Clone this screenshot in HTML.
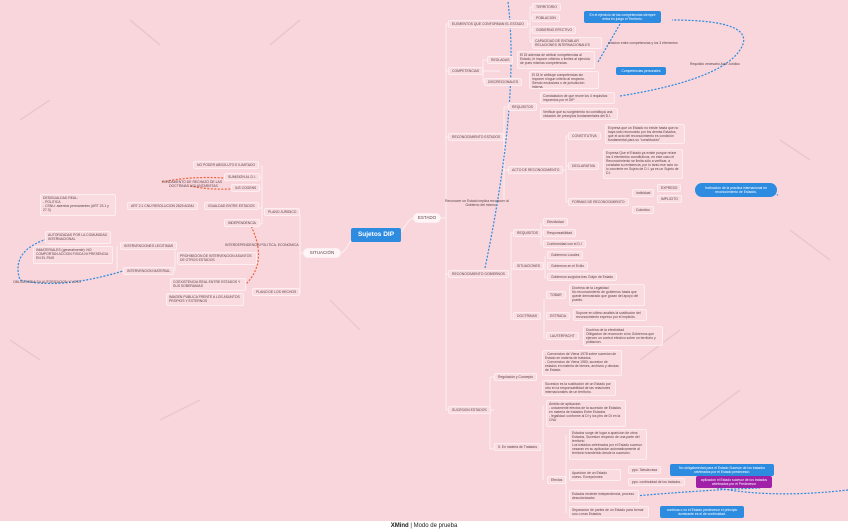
<!DOCTYPE html>
<html><head><meta charset="utf-8"><style>
body{margin:0;width:848px;height:532px;overflow:hidden;background:#f8d6dc;font-family:"Liberation Sans",sans-serif;position:relative}
.n{position:absolute;box-sizing:border-box;border:1px solid #fdeef1;border-radius:2px;background:#f9dbe0;font-size:3.4px;line-height:4.1px;color:#5a4548;padding:1px 2px;overflow:hidden}
.n[style*="height:8px"]{white-space:nowrap;width:auto!important;overflow:visible;padding:1px 3px;line-height:5px}
.c{display:flex;align-items:center}
.t{position:absolute;font-size:3.4px;line-height:4.4px;color:#5a4548;white-space:nowrap}
.b{position:absolute;box-sizing:border-box;background:#2d8be0;color:#fff;border-radius:2px;font-size:3.4px;line-height:4.2px;text-align:center;display:flex;align-items:center;justify-content:center;padding:1px 3px}
#foot{position:absolute;left:0;top:521px;width:848px;height:11px;background:#fff;font-size:6px;text-align:center;line-height:11px;color:#222}
</style></head><body>
<svg width="848" height="532" style="position:absolute;left:0;top:0">
<g stroke="#ecc6cd" stroke-width="1.5">
<line x1="130" y1="20" x2="160" y2="45"/><line x1="300" y1="20" x2="270" y2="45"/>
<line x1="20" y1="120" x2="50" y2="100"/><line x1="780" y1="140" x2="810" y2="160"/>
<line x1="640" y1="360" x2="680" y2="330"/><line x1="700" y1="420" x2="740" y2="390"/>
<line x1="160" y1="420" x2="200" y2="400"/><line x1="330" y1="300" x2="360" y2="330"/>
<line x1="790" y1="230" x2="830" y2="260"/><line x1="10" y1="340" x2="40" y2="360"/>
</g>
<g stroke="#fdf0f2" stroke-width="1" fill="none">
<path d="M401 232 Q410 218 413 218"/><path d="M351 240 Q345 252 341 253"/>
<path d="M441 218 H446"/><line x1="446" y1="24" x2="446" y2="410"/>
<path d="M446 24H448M446 71H448M446 137H448M446 274H448M446 410H448"/>
<line x1="530" y1="7" x2="530" y2="42"/><path d="M528 24H530M530 7H532M530 18H532M530 30H532M530 42H532"/>
<line x1="483" y1="60" x2="483" y2="82"/><path d="M500 71H483M483 60H487M483 82H484"/>
<line x1="504" y1="107" x2="504" y2="202"/><path d="M508 137H504M504 107H508M504 170H508"/>
<line x1="566" y1="136" x2="566" y2="202"/><path d="M562 170H566M566 136H568M566 166H568M566 202H568"/>
<line x1="511" y1="233" x2="511" y2="319"/><path d="M510 274H511M511 233H513M511 269H513M511 319H513"/>
<line x1="541" y1="223" x2="541" y2="245"/><line x1="545" y1="256" x2="545" y2="279"/><line x1="544" y1="299" x2="544" y2="339"/>
<line x1="490" y1="377" x2="490" y2="449"/><path d="M494 410H490M490 377H494M490 449H494"/>
<line x1="543" y1="405" x2="543" y2="480"/><line x1="566" y1="435" x2="566" y2="513"/>
<line x1="300" y1="214" x2="300" y2="293"/><path d="M303 253H300M300 214H298M300 293H298"/>
<line x1="262" y1="166" x2="262" y2="224"/><path d="M262 166H261M262 178H258M262 189H257M262 208H258M262 224H258"/>
<line x1="117" y1="246" x2="117" y2="271"/><line x1="175" y1="246" x2="175" y2="271"/>
</g>
<g stroke="#2d8be0" stroke-width="1.2" fill="none" stroke-dasharray="2,1.5">
<path d="M620 24 L598 62"/><path d="M620 96 Q720 80 740 50 Q760 20 672 20"/>
<path d="M508 2 Q520 100 485 268"/><path d="M700 484 Q760 500 848 490"/>
<path d="M612 498 Q700 490 760 488"/><path d="M50 238 Q10 250 20 280 Q60 290 123 271"/>
<path d="M760 190 L778 195"/>
</g>
<g stroke="#f0643c" stroke-width="1.2" fill="none" stroke-dasharray="2,1.5">
<path d="M162 182 Q190 176 224 178"/><path d="M190 186 Q210 190 231 189"/>
<path d="M248 220 Q270 260 246 284"/>
</g>
</svg>

<div class="n c" style="left:351px;top:228px;width:50px;height:14px;background:#2d8be0;color:#fff;font-size:6.5px;font-weight:bold;justify-content:center;border:none">Sujetos DIP</div>
<div class="n c" style="left:413px;top:213px;width:28px;height:10px;background:#fff5f7;justify-content:center;font-size:4.5px;border-radius:5px">ESTADO</div>
<div class="n c" style="left:303px;top:248px;width:38px;height:10px;background:#fff5f7;justify-content:center;font-size:4.5px;border-radius:5px">SITUACIÓN</div>
<div class="t" style="left:445px;top:199px;text-align:center">Reconocer un Estado implica reconocer al<br>&nbsp;&nbsp;&nbsp;&nbsp;&nbsp;&nbsp;&nbsp;&nbsp;&nbsp;Gobierno del mismo.</div>

<div class="n" style="left:448px;top:20px;width:80px;height:8px">ELEMENTOS QUE CONFORMAN EL ESTADO</div>
<div class="n" style="left:448px;top:67px;width:52px;height:8px">COMPETENCIAS</div>
<div class="n" style="left:448px;top:133px;width:58px;height:8px">RECONOCIMIENTO ESTADOS</div>
<div class="n" style="left:448px;top:270px;width:62px;height:8px">RECONOCIMIENTO GOBIERNOS</div>
<div class="n" style="left:448px;top:406px;width:46px;height:8px">SUCESION ESTADOS</div>

<div class="n" style="left:532px;top:3px;width:26px;height:8px">TERRITORIO</div>
<div class="n" style="left:532px;top:14px;width:26px;height:8px">POBLACION</div>
<div class="n" style="left:532px;top:26px;width:40px;height:8px">GOBIERNO EFECTIVO</div>
<div class="n" style="left:532px;top:37px;width:70px;height:12px">CAPACIDAD DE ENTABLAR RELACIONES INTERNACIONALES</div>
<div class="t" style="left:608px;top:41px">relacion entre competencias y los 3 elementos</div>
<div class="b" style="left:584px;top:11px;width:77px;height:12px">En el ejercicio de las competencias siempre entra en juego el Territorio.</div>
<div class="b" style="left:616px;top:67px;width:50px;height:8px">Competencias personales</div>
<div class="t" style="left:690px;top:62px">Requisito necesario Acto Juridico</div>

<div class="n" style="left:487px;top:56px;width:24px;height:8px">REGLADAS</div>
<div class="n" style="left:484px;top:78px;width:36px;height:8px">DISCRECIONALES</div>
<div class="n" style="left:517px;top:51px;width:78px;height:18px">El DI ademas de atribuir competencias al Estado, le impone criterios o limites al ejercicio de pues mismas competencias.</div>
<div class="n" style="left:529px;top:71px;width:70px;height:18px">El DI le atribuye competencias sin imponer ningun criterio al respecto. Siendo exclusivas o de jurisdiccion interna.</div>

<div class="n" style="left:508px;top:103px;width:26px;height:8px">REQUISITOS</div>
<div class="n" style="left:508px;top:166px;width:54px;height:8px">ACTO DE RECONOCIMIENTO</div>
<div class="n" style="left:540px;top:92px;width:75px;height:12px">Constatacion de que reune los 4 requisitos impuestos por el DIP</div>
<div class="n" style="left:540px;top:108px;width:78px;height:12px">Verificar que su surgimiento no constituya una violación de principios fundamentales del D.I.</div>
<div class="n" style="left:568px;top:132px;width:30px;height:8px">CONSTITUTIVA</div>
<div class="n" style="left:605px;top:124px;width:80px;height:20px">Expresa que un Estado no existe hasta que no haya sido reconocido por los demás Estados, que el acto del reconocimiento es condición fundamental para su "constitución"</div>
<div class="n" style="left:568px;top:162px;width:28px;height:8px">DECLARATIVA</div>
<div class="n" style="left:603px;top:149px;width:80px;height:30px">Expresa Que el Estado ya existe porque reúne los 4 elementos constitutivos, en este caso el Reconocimiento se limita sólo a verificar, a constatar su existencia, por lo tanto ese acto no lo convierte en Sujeto de D.I. ya es un Sujeto de D.I.</div>
<div class="n" style="left:568px;top:198px;width:58px;height:8px">FORMAS DE RECONOCIMIENTO</div>
<div class="n" style="left:632px;top:189px;width:22px;height:8px">Individual</div>
<div class="n" style="left:632px;top:206px;width:20px;height:8px">Colectivo</div>
<div class="n" style="left:657px;top:184px;width:22px;height:8px">EXPRESO</div>
<div class="n" style="left:657px;top:195px;width:22px;height:8px">IMPLICITO</div>
<div class="b" style="left:695px;top:183px;width:82px;height:14px;border-radius:7px">Inclinacion de la practica internacional en reconocimiento de Estados.</div>

<div class="n" style="left:513px;top:229px;width:28px;height:8px">REQUISITOS</div>
<div class="n" style="left:543px;top:218px;width:24px;height:8px">Efectividad</div>
<div class="n" style="left:543px;top:229px;width:34px;height:8px">Responsabilidad</div>
<div class="n" style="left:543px;top:240px;width:42px;height:8px">Conformidad con el D.I</div>
<div class="n" style="left:513px;top:262px;width:32px;height:8px">SITUACIONES</div>
<div class="n" style="left:547px;top:251px;width:34px;height:8px">Gobiernos Locales</div>
<div class="n" style="left:547px;top:262px;width:38px;height:8px">Gobiernos en el Exilio</div>
<div class="n" style="left:547px;top:273px;width:70px;height:8px">Gobiernos surgidos tras Golpe de Estado</div>
<div class="n" style="left:513px;top:312px;width:26px;height:8px">DOCTRINAS</div>
<div class="n" style="left:546px;top:291px;width:18px;height:8px">TOBAR</div>
<div class="n" style="left:569px;top:284px;width:76px;height:22px">Doctrina de la Legalidad<br>No reconocimiento de gobiernos hasta que quede demostrado que gozan del apoyo del pueblo.</div>
<div class="n" style="left:546px;top:312px;width:22px;height:8px">ESTRADA</div>
<div class="n" style="left:573px;top:309px;width:74px;height:12px">Supone en ultimo analisis la sustitucion del reconocimiento expreso por el implicito.</div>
<div class="n" style="left:546px;top:332px;width:30px;height:8px">LAUTERPACHT</div>
<div class="n" style="left:583px;top:326px;width:80px;height:20px">Doctrina de la efectividad<br>Obligacion de reconocer a los Gobiernos que ejercen un control efectivo sobre un territorio y poblacion.</div>

<div class="n" style="left:494px;top:373px;width:40px;height:8px">Regulación y Concepto</div>
<div class="n" style="left:542px;top:350px;width:80px;height:26px">- Convencion de Viena 1978 sobre sucesion de Estado en materia de tratados.<br>- Convencion de Viena 1983, sucesion de estados en materia de bienes, archivos y deudas de Estado.</div>
<div class="n" style="left:542px;top:380px;width:74px;height:16px">Sucesion es la sustitución de un Estado por otro en la responsabilidad de las relaciones internacionales de un territorio.</div>
<div class="n" style="left:494px;top:443px;width:48px;height:8px">5. En materia de Tratados</div>
<div class="n" style="left:546px;top:400px;width:80px;height:27px">Ámbito de aplicacion:<br>- unicamente efectos de la sucesión de Estados en materia de tratados Entre Estados<br>- legalidad: conforme al DI y los pbs de DI en la CNU</div>
<div class="n" style="left:547px;top:476px;width:18px;height:8px">Efectos</div>
<div class="n" style="left:569px;top:429px;width:78px;height:31px">Estados surge de lugar a aparicion de otros Estados, Sucesion respecto de una parte del territorio<br>Los tratados celebrados por el Estado sucesor cesaran en su aplicacion automaticamente al territorio transferido desde la sucesión.</div>
<div class="n" style="left:569px;top:469px;width:52px;height:12px">Aparicion de un Estado nuevo. Excepciones:</div>
<div class="n" style="left:628px;top:466px;width:32px;height:8px">ppo. Tabula rasa</div>
<div class="n" style="left:628px;top:478px;width:58px;height:8px">ppo. continuidad de los tratados.</div>
<div class="n" style="left:569px;top:490px;width:70px;height:12px">Estados reciente independencia, proceso descolonizador</div>
<div class="n" style="left:569px;top:506px;width:80px;height:12px">Separacion de partes de un Estado para formar uno o mas Estados.</div>
<div class="b" style="left:670px;top:464px;width:104px;height:12px">No obligatoriedad para el Estado Sucesor de los tratados celebrados por el Estado predecesor.</div>
<div class="b" style="left:696px;top:476px;width:76px;height:12px;background:#a020a8">aplicacion el Estado sucesor de los tratados celebrados por el Predecesor</div>
<div class="b" style="left:660px;top:506px;width:84px;height:12px">continua o no el Estado predecesor el principio dominante es el de continuidad.</div>

<div class="n" style="left:264px;top:208px;width:34px;height:8px">PLANO JURIDICO</div>
<div class="n" style="left:252px;top:288px;width:46px;height:8px">PLANO DE LOS HECHOS</div>
<div class="n" style="left:193px;top:161px;width:68px;height:8px">NO PODER ABSOLUTO E ILIMITADO</div>
<div class="n" style="left:224px;top:173px;width:34px;height:8px">SUMISION AL D.I.</div>
<div class="n" style="left:231px;top:184px;width:26px;height:8px">IUS COGENS</div>
<div class="t" style="left:162px;top:180px;text-align:center">FUNDAMENTO DE RECHAZO DE LAS<br>&nbsp;&nbsp;&nbsp;DOCTRINAS VOLUNTARISTAS</div>
<div class="n" style="left:204px;top:202px;width:54px;height:8px">IGUALDAD ENTRE ESTADOS</div>
<div class="n" style="left:224px;top:219px;width:34px;height:8px">INDEPENDENCIA</div>
<div class="t" style="left:225px;top:243px">INTERDEPENDENCIA POLITICA, ECONOMICA</div>
<div class="n" style="left:127px;top:202px;width:72px;height:8px">ART 2.1 CNU RESOLUCION 2625 AGNU</div>
<div class="n" style="left:40px;top:194px;width:76px;height:22px">DESIGUALDAD REAL:<br>- POLITICA<br>- CSNU: asientos permanentes (ART 23.1 y 27.3)</div>
<div class="n" style="left:45px;top:231px;width:66px;height:13px">AUTORIZADAS POR LA COMUNIDAD INTERNACIONAL</div>
<div class="n" style="left:33px;top:246px;width:80px;height:18px">INMATERIALES (generalmente): NO COMPORTAN ACCION FISICA NI PRESENCIA EN EL PAIS</div>
<div class="n" style="left:120px;top:242px;width:52px;height:8px">INTERVENCIONES LEGITIMAS</div>
<div class="n" style="left:177px;top:252px;width:80px;height:13px">PROHIBICION DE INTERVENCION ASUNTOS DE OTROS ESTADOS</div>
<div class="n" style="left:123px;top:267px;width:50px;height:8px">INTERVENCION MATERIAL</div>
<div class="n" style="left:170px;top:278px;width:76px;height:13px">COEXISTENCIA REAL ENTRE ESTADOS Y SUS SOBERANIAS</div>
<div class="n" style="left:166px;top:293px;width:78px;height:13px">IMAGEN PUBLICA FRENTE A LOS ASUNTOS PROPIOS Y EXTERNOS</div>
<div class="t" style="left:13px;top:280px">OBLIGATORIA SU AUTORIZACION Y VOTO</div>

<div id="foot"><b>XMind</b> | Modo de prueba</div>
</body></html>
